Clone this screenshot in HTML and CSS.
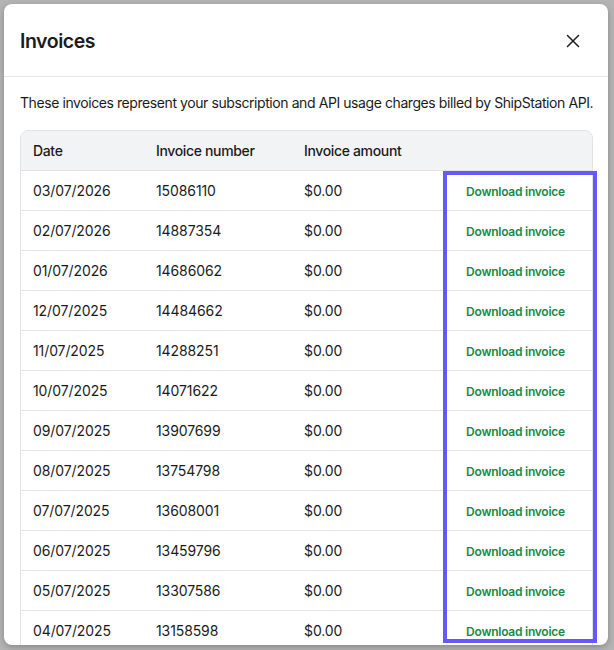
FILE: index.html
```html
<!DOCTYPE html>
<html lang="en">
<head>
<meta charset="utf-8">
<title>Invoices</title>
<link rel="stylesheet" href="styles.css">
</head>
<body>
<div class="backdrop">
  <div class="modal">
    <div class="modal-header">
      <h1 class="modal-title">Invoices</h1>
      <button class="close-btn" aria-label="Close">
        <svg width="14" height="14" viewBox="0 0 14 14"><path d="M1.5 1.5 L12.5 12.5 M12.5 1.5 L1.5 12.5" stroke="#1f1f1f" stroke-width="1.5" stroke-linecap="round" fill="none"/></svg>
      </button>
    </div>
    <div class="modal-body">
      <p class="desc">These invoices represent your subscription and API usage charges billed by ShipStation API.</p>
      <table class="invoices">
        <colgroup>
          <col class="c-date"><col class="c-num"><col class="c-amt"><col class="c-dl">
        </colgroup>
        <thead>
          <tr><th>Date</th><th>Invoice number</th><th>Invoice amount</th><th></th></tr>
        </thead>
        <tbody>
          <tr><td>03/07/2026</td><td>15086110</td><td>$0.00</td><td class="dl"><a href="#">Download invoice</a></td></tr>
          <tr><td>02/07/2026</td><td>14887354</td><td>$0.00</td><td class="dl"><a href="#">Download invoice</a></td></tr>
          <tr><td>01/07/2026</td><td>14686062</td><td>$0.00</td><td class="dl"><a href="#">Download invoice</a></td></tr>
          <tr><td>12/07/2025</td><td>14484662</td><td>$0.00</td><td class="dl"><a href="#">Download invoice</a></td></tr>
          <tr><td>11/07/2025</td><td>14288251</td><td>$0.00</td><td class="dl"><a href="#">Download invoice</a></td></tr>
          <tr><td>10/07/2025</td><td>14071622</td><td>$0.00</td><td class="dl"><a href="#">Download invoice</a></td></tr>
          <tr><td>09/07/2025</td><td>13907699</td><td>$0.00</td><td class="dl"><a href="#">Download invoice</a></td></tr>
          <tr><td>08/07/2025</td><td>13754798</td><td>$0.00</td><td class="dl"><a href="#">Download invoice</a></td></tr>
          <tr><td>07/07/2025</td><td>13608001</td><td>$0.00</td><td class="dl"><a href="#">Download invoice</a></td></tr>
          <tr><td>06/07/2025</td><td>13459796</td><td>$0.00</td><td class="dl"><a href="#">Download invoice</a></td></tr>
          <tr><td>05/07/2025</td><td>13307586</td><td>$0.00</td><td class="dl"><a href="#">Download invoice</a></td></tr>
          <tr><td>04/07/2025</td><td>13158598</td><td>$0.00</td><td class="dl"><a href="#">Download invoice</a></td></tr>
          <tr><td>03/07/2025</td><td>13010452</td><td>$0.00</td><td class="dl"><a href="#">Download invoice</a></td></tr>
        </tbody>
      </table>
    </div>
  </div>
  <div class="highlight"></div>
</div>
</body>
</html>
```

FILE: styles.css
```css
* { box-sizing: border-box; }
html, body {
  margin: 0;
  padding: 0;
  width: 614px;
  height: 650px;
  overflow: hidden;
  font-family: Inter, "Noto Sans", "Liberation Sans", sans-serif;
  color: #1b1b1b;
}
.backdrop {
  position: relative;
  width: 614px;
  height: 650px;
  background: #b4b4b4;
  padding: 4px 6px 5px 4px;
}
.modal {
  width: 604px;
  height: 641px;
  background: #ffffff;
  border-radius: 8px;
  box-shadow: 0 2px 6px rgba(0, 0, 0, 0.25);
  display: flex;
  flex-direction: column;
  overflow: hidden;
}
.modal-header {
  height: 73px;
  flex: 0 0 73px;
  display: flex;
  align-items: center;
  justify-content: space-between;
  padding: 0 28px 0 16px;
  border-bottom: 1px solid #e6e6e6;
}
.modal-title {
  margin: 0;
  font-size: 19.5px;
  font-weight: 600;
  letter-spacing: -0.45px;
  color: #1b1b1b;
  padding-top: 2px;
}
.close-btn {
  border: 0;
  background: none;
  padding: 0;
  width: 14px;
  height: 14px;
  display: flex;
  cursor: pointer;
  margin-top: 2px;
}
.modal-body {
  flex: 1;
  overflow: hidden;
  padding: 16px 15px 0 16px;
}
.desc {
  margin: 0 0 17px;
  font-size: 14px;
  line-height: 20px;
  color: #1b1b1b;
  letter-spacing: -0.42px;
  white-space: nowrap;
}
.invoices {
  width: 573px;
  table-layout: fixed;
  border-collapse: separate;
  border-spacing: 0;
  border: 1px solid #e2e2e2;
  border-radius: 8px 8px 0 0;
  font-size: 14px;
}
.c-date { width: 123px; }
.c-num { width: 148px; }
.c-amt { width: 152px; }
.c-dl { width: 148px; }
.invoices th {
  background: #f2f3f5;
  text-align: left;
  font-weight: 500;
  letter-spacing: -0.35px;
  height: 40px;
  padding: 0 12px;
  border-bottom: 1px solid #e2e2e2;
  color: #1b1b1b;
}
.invoices th:first-child { border-top-left-radius: 7px; }
.invoices th:last-child { border-top-right-radius: 7px; }
.invoices td {
  height: 40px;
  padding: 0 12px;
  border-bottom: 1px solid #e2e2e2;
  color: #1b1b1b;
  font-weight: 400;
  letter-spacing: -0.1px;
}
.invoices td.dl {
  text-align: center;
  padding: 0 5px 0 0;
}
.invoices td.dl a {
  color: #178a47;
  font-size: 12px;
  font-weight: 600;
  letter-spacing: -0.25px;
  text-decoration: none;
}
.highlight {
  position: absolute;
  left: 443px;
  top: 171px;
  width: 154px;
  height: 472px;
  border: 4px solid #6558ff;
  pointer-events: none;
}
```
